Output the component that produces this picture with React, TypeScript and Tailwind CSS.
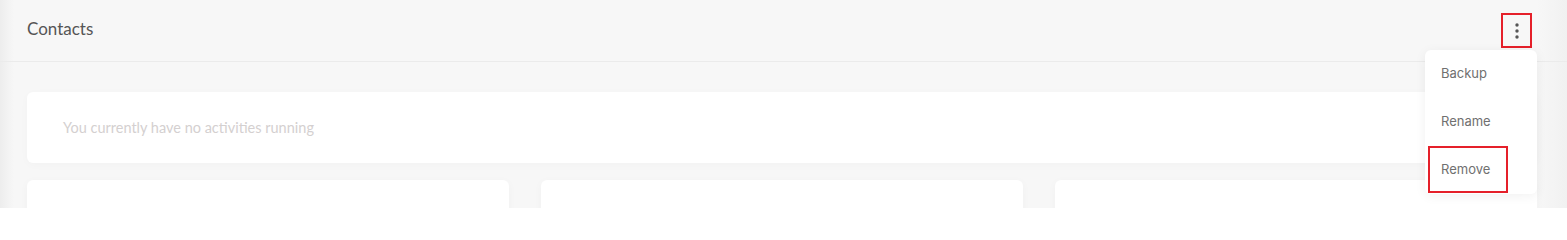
import React from "react";

const menuItems = ["Backup", "Rename", "Remove"];

function KebabIcon() {
  return (
    <svg width="6" height="16" viewBox="0 0 6 16" fill="#555">
      <circle cx="3" cy="2" r="1.7" />
      <circle cx="3" cy="8" r="1.7" />
      <circle cx="3" cy="14" r="1.7" />
    </svg>
  );
}

function ActionsMenu() {
  return (
    <div className="absolute right-[-5px] top-[37px] z-20 w-[112px] rounded-md bg-white shadow-[0_2px_12px_rgba(0,0,0,0.06)]">
      {menuItems.map((item) => (
        <div
          key={item}
          className="relative flex h-[48px] items-center pl-[16px] text-[13px] text-[#707070]"
          style={{ fontFamily: "Inter, 'Noto Sans', sans-serif" }}
        >
          {item}
          {item === "Remove" && (
            <span className="absolute left-[3px] top-0 h-[47px] w-[80px] border-2 border-[#e5202a]" />
          )}
        </div>
      ))}
    </div>
  );
}

export default function App() {
  return (
    <div
      className="relative h-[208px] w-full overflow-hidden bg-[#f7f7f7]"
      style={{ fontFamily: "Lato, 'Open Sans', sans-serif" }}
    >
      <div className="pointer-events-none absolute inset-y-0 left-0 w-[14px] bg-gradient-to-r from-[#ededed] to-transparent" />
      <div className="pointer-events-none absolute inset-y-0 right-0 w-[30px] bg-gradient-to-l from-[#f1f1f1] to-transparent" />

      <header className="relative flex h-[62px] items-center justify-between border-b border-[#ebebeb] pl-[27px] pr-[35px]">
        <span className="pb-[3px] text-[17px] text-[#555]">Contacts</span>
        <div className="relative">
          <button className="flex h-[35px] w-[31px] items-center justify-center border-2 border-[#e5202a]">
            <KebabIcon />
          </button>
          <ActionsMenu />
        </div>
      </header>

      <main className="relative flex flex-col gap-[17px] pl-[27px] pr-[30px] pt-[30px]">
        <div className="flex h-[71px] items-center rounded-md bg-white pl-[36px] shadow-[0_2px_10px_rgba(0,0,0,0.025)]">
          <span className="text-[14.5px] text-[#d4d0d0]">
            You currently have no activities running
          </span>
        </div>
        <div className="grid grid-cols-3 gap-[32px]">
          <div className="h-[60px] rounded-md bg-white shadow-[0_2px_10px_rgba(0,0,0,0.03)]" />
          <div className="h-[60px] rounded-md bg-white shadow-[0_2px_10px_rgba(0,0,0,0.03)]" />
          <div className="h-[60px] rounded-md bg-white shadow-[0_2px_10px_rgba(0,0,0,0.03)]" />
        </div>
      </main>
    </div>
  );
}
